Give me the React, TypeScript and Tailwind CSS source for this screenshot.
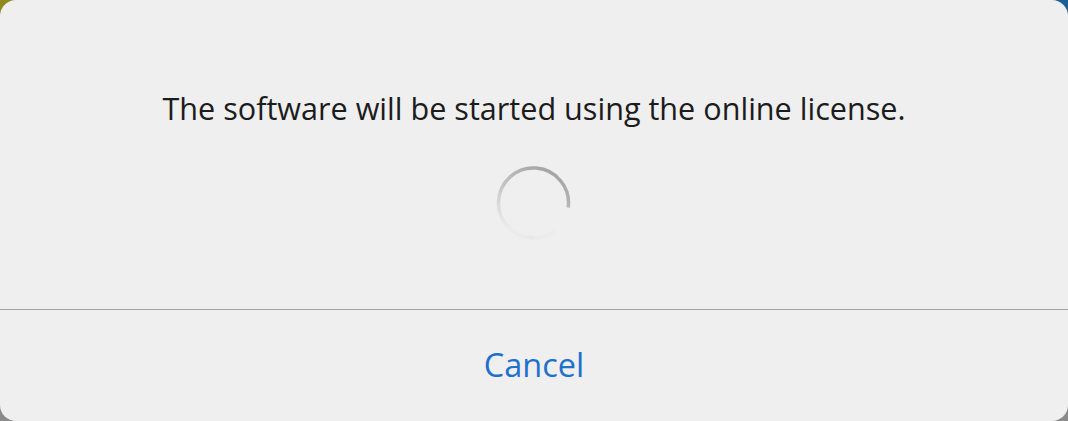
import React from "react";

export default function App() {
  return (
    <div className="w-[1068px] h-[421px] bg-[linear-gradient(to_bottom,transparent_50%,#8a8a8a_50%),linear-gradient(to_right,#8e8a1c_50%,#1d5f92_50%)]">
      <div
        className="w-full h-full bg-[#efefef] rounded-[16px] flex flex-col"
        style={{ fontFamily: '"Open Sans", "Noto Sans", sans-serif' }}
      >
        <div className="h-[309px] flex flex-col items-center">
          <div className="mt-[86px] text-[30.6px] leading-[44px] text-[#1c1c1c]">
            The software will be started using the online license.
          </div>
          <div className="mt-[34px]">
            <svg width="78" height="78" viewBox="0 0 78 78">
              <defs>
                <linearGradient id="g" x1="0.8" y1="0.1" x2="0.3" y2="0.95">
                  <stop offset="0" stopColor="#a6a6a6" />
                  <stop offset="0.5" stopColor="#c4c4c4" />
                  <stop offset="1" stopColor="#ebebeb" />
                </linearGradient>
              </defs>
              <path
                d="M 73.2 43.5 A 35 35 0 1 0 39 74"
                fill="none"
                stroke="url(#g)"
                strokeWidth="3.5"
              />
              <path
                d="M 39 74 A 35 35 0 0 0 60 67"
                fill="none"
                stroke="#ececec"
                strokeWidth="3.5"
              />
            </svg>
          </div>
        </div>
        <div className="h-px bg-[#a3a3a3]" />
        <div className="flex-1 flex items-center justify-center">
          <span className="text-[32.5px] leading-[44px] text-[#1f6fcc] -mt-[2px]">Cancel</span>
        </div>
      </div>
    </div>
  );
}
